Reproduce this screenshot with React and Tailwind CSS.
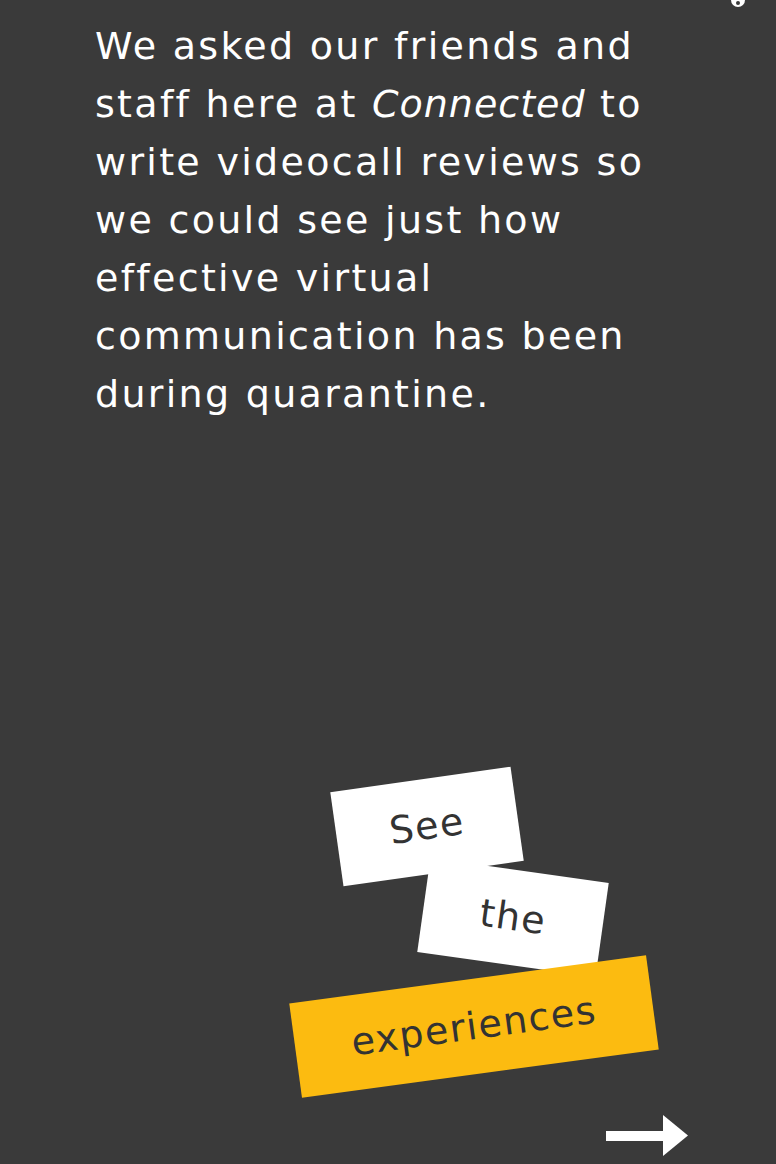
import React from "react";

const lines = [
  ["We asked our friends and"],
  ["staff here at ", <em key="c" className="tracking-[1px]">Connected</em>, " to"],
  ["write videocall reviews so"],
  ["we could see just how"],
  ["effective virtual"],
  ["communication has been"],
  ["during quarantine."],
];

function Card({ children, className }) {
  return (
    <div
      className={
        "flex h-[95px] items-center justify-center text-[38px] tracking-[1.5px] text-[#333333] " +
        className
      }
    >
      {children}
    </div>
  );
}

export default function App() {
  return (
    <div
      className="relative h-[1164px] w-full overflow-hidden bg-[#3a3a3a]"
      style={{ fontFamily: '"DejaVu Sans", "Open Sans", sans-serif' }}
    >
      {/* partial icon peeking at the top edge */}
      <svg className="absolute right-[30px] top-0" width="16" height="10" viewBox="0 0 16 10">
        <circle cx="8" cy="0" r="7" fill="#ffffff" />
        <circle cx="8" cy="3" r="2" fill="#3a3a3a" />
      </svg>

      {/* intro copy */}
      <div className="pl-[95px] pt-[17px] text-[38px] leading-[58px] tracking-[2.3px] text-white">
        {lines.map((l, i) => (
          <div key={i} className="whitespace-nowrap">
            {l}
          </div>
        ))}
      </div>

      {/* call to action */}
      <div className="mt-[356px] flex flex-col">
        <Card className="relative z-10 ml-[336px] w-[182px] -rotate-[8deg] bg-white">
          See
        </Card>
        <Card className="-mt-[4px] ml-[423px] w-[180px] rotate-[8deg] bg-white">
          the
        </Card>
        <Card className="relative z-20 mt-[14px] ml-[294px] w-[360px] -rotate-[7.7deg] bg-[#fcbb10]">
          experiences
        </Card>
        <svg className="ml-[606px] mt-[41px]" width="84" height="42" viewBox="0 0 84 42">
          <rect x="0" y="16" width="60" height="10" fill="#ffffff" />
          <polygon points="57,0 82,20.5 57,41" fill="#ffffff" />
        </svg>
      </div>
    </div>
  );
}
